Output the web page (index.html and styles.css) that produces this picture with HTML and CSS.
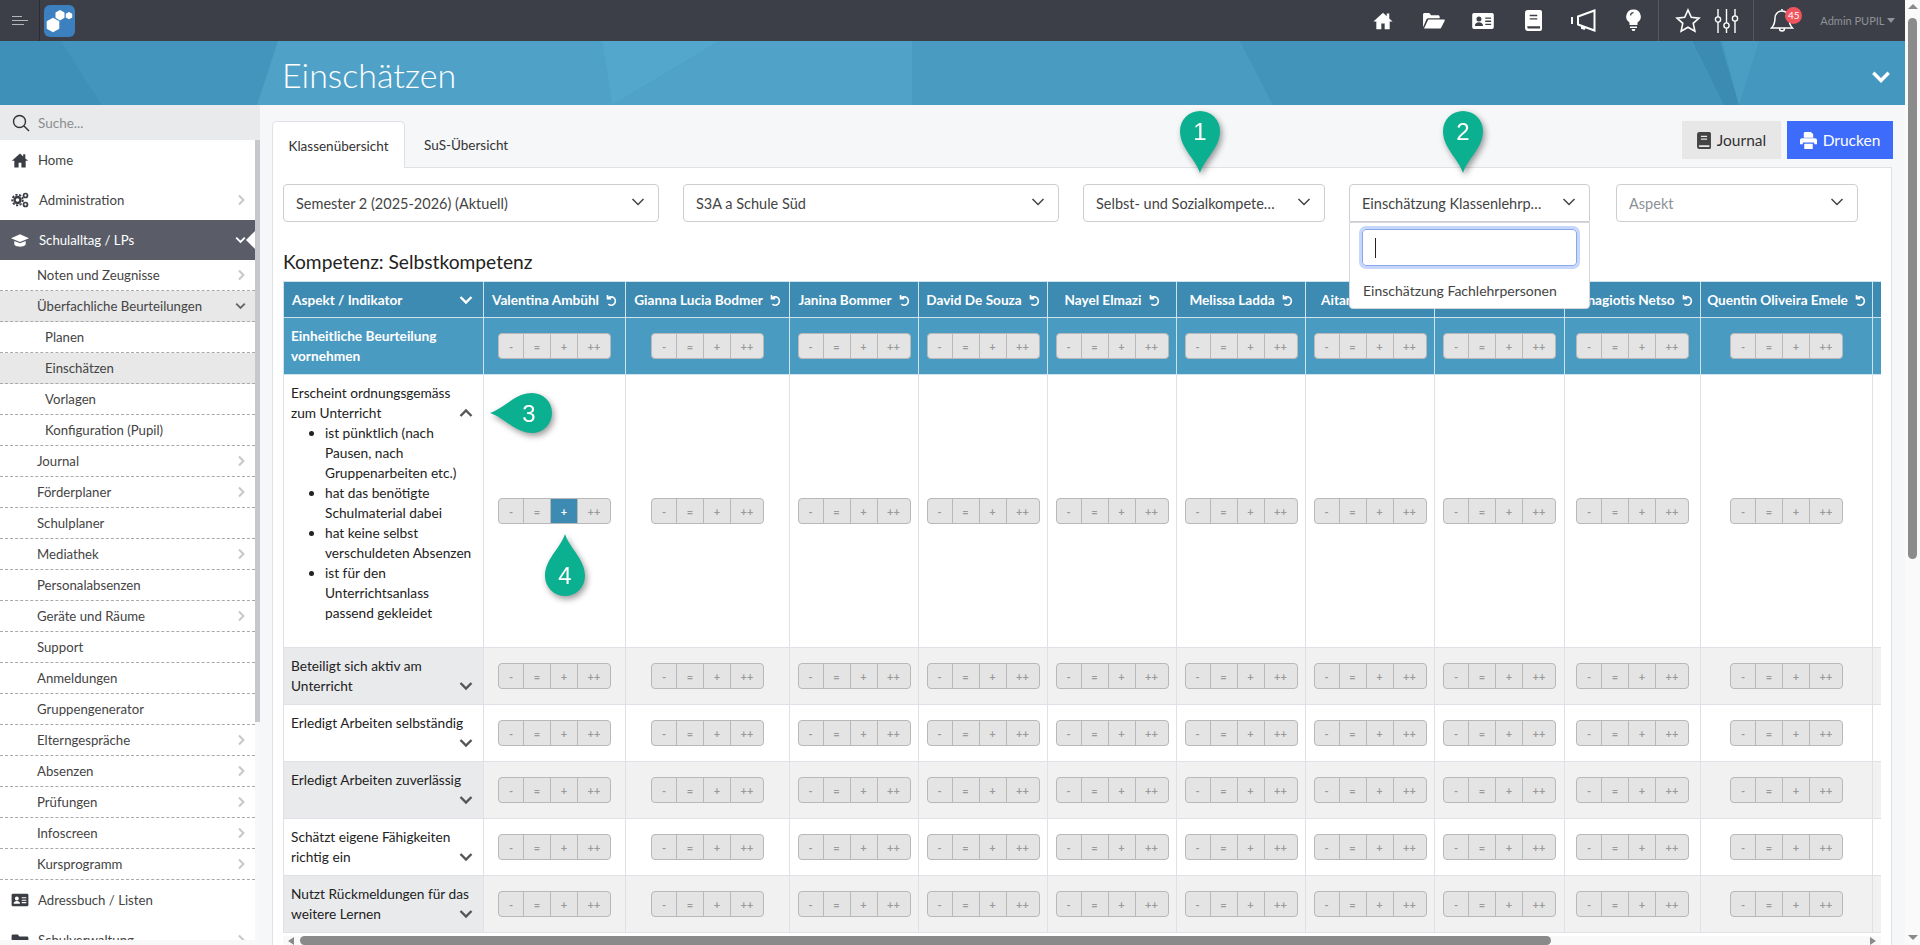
FILE: index.html
```html
<!DOCTYPE html>
<html lang="de">
<head>
    <meta charset="UTF-8">
    <meta name="viewport" content="width=device-width, initial-scale=1.0">
    <title>Einschätzen</title>
    <link rel="stylesheet" href="styles.css">
</head>
<body>
    <svg class="defs" aria-hidden="true">
        <symbol id="pin-shape" viewBox="0 0 40 62"><path d="M20 62C15 47 0 37 0 20a20 20 0 0 1 40 0C40 37 25 47 20 62z"/></symbol>
        <symbol id="chev-right" viewBox="0 0 10 14"><path d="M2.5 1.5 8 7l-5.500 5.500" fill="none" stroke="currentColor" stroke-width="2.600"/></symbol>
        <symbol id="chev-down" viewBox="0 0 14 10"><path d="M1.500 2 7 7.500 12.500 2" fill="none" stroke="currentColor" stroke-width="2.400"/></symbol>
        <symbol id="chev-thin" viewBox="0 0 14 10"><path d="M1.500 2 7 7.500 12.500 2" fill="none" stroke="currentColor" stroke-width="1.500"/></symbol>
        <symbol id="undo" viewBox="0 0 12 12"><path d="M2.500 1v3.700h3.700M2.800 4.500a4.200 4.200 0 1 1 .6 5.700" fill="none" stroke="currentColor" stroke-width="1.600"/></symbol>
        <symbol id="id-card" viewBox="0 0 24 20"><path fill-rule="evenodd" d="M2 1h20a2 2 0 0 1 2 2v14a2 2 0 0 1-2 2H2a2 2 0 0 1-2-2V3a2 2 0 0 1 2-2zM7.500 5a2.800 2.800 0 1 0 0 5.600 2.800 2.800 0 0 0 0-5.600zM3 15.500h9c0-2.500-1.800-4-4.500-4S3 13 3 15.500zM14.500 6v1.500H21V6zM14.500 9.500V11H21V9.500zM14.500 13v1.500H21V13z"/></symbol>
        <symbol id="book" viewBox="0 0 18 22"><path fill-rule="evenodd" d="M3 0h13a2 2 0 0 1 2 2v18a2 2 0 0 1-2 2H3a3 3 0 0 1-3-3V3a3 3 0 0 1 3-3zM5 5v1.500h8V5zM5 8.500V10h8V8.500zM2.500 17v1.500c0 .5.300 1 1 1H16V17z"/></symbol>
        <symbol id="home" viewBox="0 0 24 24"><path d="M12 2 .5 12.500H4V22h6v-7h4v7h6v-9.500h3.500L19.500 9V3h-3v3.200z"/></symbol>
        <symbol id="folder" viewBox="0 0 24 20"><path d="M1 17V3.500C1 2.700 1.700 2 2.500 2h5l2 2.500h7.500c.8 0 1.500.7 1.500 1.500v1.500H6.500c-.8 0-1.500.4-1.900 1.100zM6.500 9H23c.7 0 1.100.7.800 1.300L20 17.500c-.3.600-.9.900-1.500.9H2z"/></symbol>
    </svg>

    <div class="page">
        <div class="app">
            <header class="topbar">
                <div class="burger"><span class="b1"></span><span class="b2"></span><span class="b3"></span></div>
                <div class="logo">
                    <svg viewBox="0 0 31 32" width="31" height="32">
                        <path d="M9 12.700l6.300 3.650v7.300L9 27.300l-6.300-3.650v-7.300z"/>
                        <path d="M16 5l4.500 2.600v5.200L16 15.400l-4.500-2.600V7.600z"/>
                        <path d="M25 7l3.200 1.800v3.600L25 14.200l-3.200-1.800V8.800z"/>
                    </svg>
                </div>
                <nav class="top-links">
                    <a><svg width="20" height="20"><use href="#home"/></svg></a>
                    <a><svg width="23" height="19"><use href="#folder"/></svg></a>
                    <a><svg width="22" height="18"><use href="#id-card"/></svg></a>
                    <a><svg width="17" height="21"><use href="#book"/></svg></a>
                    <a><svg width="26" height="23" viewBox="0 0 26 23" fill="none" stroke="#fff" stroke-width="2"><path d="M8 7.500 24.500 1.500v20L8 15.500zM2 8v7M12 17v2l3 1"/></svg></a>
                    <a><svg width="15" height="23" viewBox="0 0 15 23"><path fill-rule="evenodd" d="M7.500 .5A7 7 0 0 0 3.500 13.400V16h8v-2.600A7 7 0 0 0 7.500 .5zM4 6.500a3.500 3.500 0 0 1 3.500-3.500v1.200A2.300 2.300 0 0 0 5.200 6.500z"/><path d="M4 17.500h7V19H4zM5.500 20h4l-1 2h-2z"/></svg></a>
                </nav>
                <nav class="top-tools">
                    <a><svg width="26" height="26" viewBox="0 0 26 26" fill="none" stroke="#fff" stroke-width="1.600"><path d="M13 2l3.300 7.300 7.700.8-5.800 5.200 1.700 7.900L13 19.200 6.100 23.200l1.700-7.900L2 10.100l7.700-.8z"/></svg></a>
                    <a><svg width="25" height="26" viewBox="0 0 25 26" fill="none" stroke="#fff" stroke-width="1.400"><path d="M4 1v8M4 14v11M12.500 1v14M12.500 20v5M21 1v7M21 13v12"/><circle cx="4" cy="11.500" r="2.600"/><circle cx="12.500" cy="17.500" r="2.600"/><circle cx="21" cy="10.500" r="2.600"/></svg></a>
                </nav>
                <div class="top-bell">
                    <svg width="24" height="26" viewBox="0 0 24 26" fill="none" stroke="#fff" stroke-width="1.500"><path d="M12 3a7 7 0 0 0-7 7c0 6-1.500 8-3.500 10h21c-2-2-3.500-4-3.500-10a7 7 0 0 0-7-7zM12 1v2M9.500 20.500a2.500 2.500 0 0 0 5 0"/></svg>
                    <span class="badge">45</span>
                </div>
                <div class="top-user">Admin PUPIL <span class="caret-down"></span></div>
            </header>

            <div class="title-band">
                <svg class="band-art" viewBox="0 0 1905 64" preserveAspectRatio="none" aria-hidden="true">
                    <rect width="1905" height="64" fill="#4497be"/>
                    <path d="M0 0h61l41 64H0z" fill="#3f90b8"/>
                    <path d="M61 0h217l-21 64H102z" fill="#4495bd"/>
                    <path d="M278 0h324l10 64H257z" fill="#4fa1c7"/>
                    <path d="M602 0h118L612 64z" fill="#54a7cc"/>
                    <path d="M720 0h192v64H612z" fill="#50a2c8"/>
                    <path d="M912 0h328l33 64H912z" fill="#4a9bc2"/>
                    <path d="M1240 0h450l34 64h-451z" fill="#4394bb"/>
                    <path d="M1692 0h28l19 64h-15z" fill="#3b8bb2"/>
                    <path d="M1722 0h37l-20 64z" fill="#4a9ec4"/>
                </svg>
                <h1 class="page-title">Einschätzen</h1>
                <svg class="band-chev" width="20" height="14"><use href="#chev-down"/></svg>
            </div>

            <div class="content-row">
                <aside class="sidebar">
                    <div class="side-search">
                        <svg width="18" height="18" viewBox="0 0 18 18" fill="none" stroke="#333" stroke-width="1.400"><circle cx="7.500" cy="7.500" r="6"/><path d="M12 12l5 5"/></svg>
                        <span>Suche...</span>
                    </div>
                    <div class="side-body">
                        <ul class="side-menu">
                            <li class="top-item">
                                <svg class="ico" width="17" height="17"><use href="#home"/></svg><span>Home</span>
                            </li>
                            <li class="top-item">
                                <svg class="ico ico-wide" width="18" height="16" viewBox="0 0 18 16" fill="none" stroke="currentColor"><circle cx="6.500" cy="8" r="3" stroke-width="2.400"/><circle cx="6.500" cy="8" r="5.300" stroke-width="1.800" stroke-dasharray="2.200 1.500"/><circle cx="14.500" cy="3.500" r="2" stroke-width="1.700"/><circle cx="14.500" cy="12.500" r="2" stroke-width="1.700"/></svg><span>Administration</span>
                                <svg class="more" width="8" height="12"><use href="#chev-right"/></svg>
                            </li>
                            <li class="top-item top-open">
                                <svg class="ico ico-wide" width="19" height="15" viewBox="0 0 19 15"><path d="M9.500 1 0 5l9.500 4L19 5zM3.500 8v3.500c0 1.500 3 2.500 6 2.500s6-1 6-2.500V8l-6 2.500z"/></svg><span>Schulalltag / LPs</span>
                                <svg class="more-open" width="11" height="8"><use href="#chev-down"/></svg>
                                <i class="notch"></i>
                            </li>
                            <li class="sub-item">Noten und Zeugnisse<svg class="more" width="8" height="12"><use href="#chev-right"/></svg></li>
                            <li class="sub-item is-on">Überfachliche Beurteilungen<svg class="more-down" width="11" height="8"><use href="#chev-down"/></svg></li>
                            <li class="sub-item deep">Planen</li>
                            <li class="sub-item deep is-on">Einschätzen</li>
                            <li class="sub-item deep">Vorlagen</li>
                            <li class="sub-item deep">Konfiguration (Pupil)</li>
                            <li class="sub-item">Journal<svg class="more" width="8" height="12"><use href="#chev-right"/></svg></li>
                            <li class="sub-item">Förderplaner<svg class="more" width="8" height="12"><use href="#chev-right"/></svg></li>
                            <li class="sub-item">Schulplaner</li>
                            <li class="sub-item">Mediathek<svg class="more" width="8" height="12"><use href="#chev-right"/></svg></li>
                            <li class="sub-item">Personalabsenzen</li>
                            <li class="sub-item">Geräte und Räume<svg class="more" width="8" height="12"><use href="#chev-right"/></svg></li>
                            <li class="sub-item">Support</li>
                            <li class="sub-item">Anmeldungen</li>
                            <li class="sub-item">Gruppengenerator</li>
                            <li class="sub-item">Elterngespräche<svg class="more" width="8" height="12"><use href="#chev-right"/></svg></li>
                            <li class="sub-item">Absenzen<svg class="more" width="8" height="12"><use href="#chev-right"/></svg></li>
                            <li class="sub-item">Prüfungen<svg class="more" width="8" height="12"><use href="#chev-right"/></svg></li>
                            <li class="sub-item">Infoscreen<svg class="more" width="8" height="12"><use href="#chev-right"/></svg></li>
                            <li class="sub-item">Kursprogramm<svg class="more" width="8" height="12"><use href="#chev-right"/></svg></li>
                            <li class="top-item">
                                <svg class="ico" width="17" height="14"><use href="#id-card"/></svg><span>Adressbuch / Listen</span>
                            </li>
                            <li class="top-item">
                                <svg class="ico" width="17" height="14" viewBox="0 0 24 20"><path d="M2 2h7l2 3h11a2 2 0 0 1 2 2v10a2 2 0 0 1-2 2H2a2 2 0 0 1-2-2V4a2 2 0 0 1 2-2z"/></svg><span>Schulverwaltung</span>
                                <svg class="more" width="8" height="12"><use href="#chev-right"/></svg>
                            </li>
                        </ul>
                        <div class="side-scroll"><div class="side-thumb"></div></div>
                    </div>
                </aside>

                <main class="main">
                    <div class="tab-row">
                        <a class="tab tab-active">Klassenübersicht</a>
                        <a class="tab">SuS-Übersicht</a>
                        <div class="tab-actions">
                            <button class="btn btn-journal"><svg width="14" height="17"><use href="#book"/></svg>Journal</button>
                            <button class="btn btn-print">
                                <svg width="17" height="17" viewBox="0 0 18 18"><path fill-rule="evenodd" d="M4 1.500C4 .7 4.700 0 5.500 0h6L14 2.500V6H4zM2 6.500h14a2 2 0 0 1 2 2V13h-3v-2H3v2H0V8.500a2 2 0 0 1 2-2zM4.500 12.500h9V18h-9z"/></svg>Drucken
                            </button>
                        </div>
                    </div>

                    <section class="panel">
                        <div class="filters">
                            <div class="select sel-wide"><span class="select-value">Semester 2 (2025-2026) (Aktuell)</span><svg width="14" height="10"><use href="#chev-thin"/></svg></div>
                            <div class="select sel-wide"><span class="select-value">S3A a Schule Süd</span><svg width="14" height="10"><use href="#chev-thin"/></svg></div>
                            <div class="select sel-mid"><span class="select-value">Selbst- und Sozialkompetenzen</span><svg width="14" height="10"><use href="#chev-thin"/></svg></div>
                            <div class="select sel-open">
                                <span class="select-value">Einschätzung Klassenlehrpersonen</span><svg width="14" height="10"><use href="#chev-thin"/></svg>
                                <div class="dropdown">
                                    <div class="dropdown-search"><span class="text-caret"></span></div>
                                    <div class="dropdown-option">Einschätzung Fachlehrpersonen</div>
                                </div>
                            </div>
                            <div class="select sel-aspect"><span class="select-value placeholder">Aspekt</span><svg width="14" height="10"><use href="#chev-thin"/></svg></div>
                        </div>

                        <h2 class="section-title">Kompetenz: Selbstkompetenz</h2>

                        <div class="table-clip">
                            <table class="rating-table">
                                <colgroup>
                                    <col class="c-aspect"><col class="c-1"><col class="c-2"><col class="c-3"><col class="c-4"><col class="c-5"><col class="c-6"><col class="c-7"><col class="c-8"><col class="c-9"><col class="c-10"><col class="c-11">
                                </colgroup>
                                <thead>
                                    <tr>
                                        <th class="th-aspect"><div class="aspect-title">Aspekt / Indikator<svg width="14" height="10"><use href="#chev-down"/></svg></div></th>
                                        <th>Valentina Ambühl<svg class="reset" width="12" height="12"><use href="#undo"/></svg></th>
                                        <th>Gianna Lucia Bodmer<svg class="reset" width="12" height="12"><use href="#undo"/></svg></th>
                                        <th>Janina Bommer<svg class="reset" width="12" height="12"><use href="#undo"/></svg></th>
                                        <th>David De Souza<svg class="reset" width="12" height="12"><use href="#undo"/></svg></th>
                                        <th>Nayel Elmazi<svg class="reset" width="12" height="12"><use href="#undo"/></svg></th>
                                        <th>Melissa Ladda<svg class="reset" width="12" height="12"><use href="#undo"/></svg></th>
                                        <th class="th-cut">Aitan</th>
                                        <th></th>
                                        <th class="th-end">Panagiotis Netso<svg class="reset" width="12" height="12"><use href="#undo"/></svg></th>
                                        <th>Quentin Oliveira Emele<svg class="reset" width="12" height="12"><use href="#undo"/></svg></th>
                                        <th></th>
                                    </tr>
                                </thead>
                                <tbody>
                                    <tr class="row-all"><td class="aspect">Einheitliche Beurteilung vornehmen</td></tr>
                                    <tr class="row-open">
                                        <td class="aspect">
                                            <div class="aspect-head"><span>Erscheint ordnungsgemäss<br>zum Unterricht</span><svg width="14" height="10" class="flip"><use href="#chev-down"/></svg></div>
                                            <ul class="indicators">
                                                <li>ist pünktlich (nach Pausen, nach Gruppenarbeiten etc.)</li>
                                                <li>hat das benötigte Schulmaterial dabei</li>
                                                <li>hat keine selbst verschuldeten Absenzen</li>
                                                <li>ist für den Unterrichtsanlass passend gekleidet</li>
                                            </ul>
                                        </td>
                                    </tr>
                                    <tr class="row-grey"><td class="aspect"><div class="aspect-head"><span>Beteiligt sich aktiv am Unterricht</span><svg width="14" height="10"><use href="#chev-down"/></svg></div></td></tr>
                                    <tr><td class="aspect"><div class="aspect-head"><span>Erledigt Arbeiten selbständig</span><svg width="14" height="10"><use href="#chev-down"/></svg></div></td></tr>
                                    <tr class="row-grey"><td class="aspect"><div class="aspect-head"><span>Erledigt Arbeiten zuverlässig</span><svg width="14" height="10"><use href="#chev-down"/></svg></div></td></tr>
                                    <tr><td class="aspect"><div class="aspect-head"><span>Schätzt eigene Fähigkeiten richtig ein</span><svg width="14" height="10"><use href="#chev-down"/></svg></div></td></tr>
                                    <tr class="row-grey"><td class="aspect"><div class="aspect-head"><span>Nutzt Rückmeldungen für das weitere Lernen</span><svg width="14" height="10"><use href="#chev-down"/></svg></div></td></tr>
                                </tbody>
                            </table>
                        </div>
                        <div class="h-scroll">
                            <span class="arrow-left"></span>
                            <span class="h-thumb"></span>
                            <span class="arrow-right"></span>
                        </div>
                    </section>
                </main>
            </div>
        </div>
        <div class="page-scroll">
            <span class="arrow-up"></span>
            <span class="page-thumb"></span>
            <span class="arrow-down"></span>
        </div>

        <svg class="pin pin-1" viewBox="0 0 40 62"><use href="#pin-shape" width="40" height="62"/><text x="20" y="29">1</text></svg>
        <svg class="pin pin-2" viewBox="0 0 40 62"><use href="#pin-shape" width="40" height="62"/><text x="20" y="29">2</text></svg>
        <svg class="pin pin-3" viewBox="0 0 62 40"><g transform="matrix(0 1 -1 0 62 0)"><use href="#pin-shape" width="40" height="62"/></g><text x="39" y="29">3</text></svg>
        <svg class="pin pin-4" viewBox="0 0 40 62"><g transform="rotate(180 20 31)"><use href="#pin-shape" width="40" height="62"/></g><text x="20" y="50">4</text></svg>
    </div>
    <script src="script.js"></script>
</body>
</html>
```

FILE: styles.css
```css
* {
    box-sizing: border-box;
}

html, body {
    height: 100%;
}

body {
    font-family: Lato, "Open Sans", sans-serif;
    font-size: 13.2px;
    color: #444;
    margin: 0;
    overflow: hidden;
}

.defs {
    display: none;
}

.page {
    position: relative;
    display: flex;
    height: 100vh;
    overflow: hidden;
}

.app {
    flex: 1;
    min-width: 0;
    display: flex;
    flex-direction: column;
}

/* top bar */
.topbar {
    flex: none;
    height: 41px;
    background: #3c3f47;
    display: flex;
    align-items: center;
    color: #fff;
}

.burger {
    width: 40px;
    height: 41px;
    border-right: 1px solid #2b2d33;
    padding: 16px 0 0 12px;
}

.burger span {
    display: block;
    height: 1px;
    background: #b4b6ba;
    margin-bottom: 3px;
}

.burger .b1 { width: 10px; }
.burger .b2 { width: 16px; }
.burger .b3 { width: 12px; }

.logo {
    width: 31px;
    height: 32px;
    margin-left: 4px;
    border-radius: 6px;
    background: #3d80bf;
}

.logo svg {
    display: block;
    fill: #fff;
}

.top-links {
    margin-left: auto;
    display: flex;
    fill: #fff;
}

.top-links a {
    width: 50px;
    height: 41px;
    display: flex;
    align-items: center;
    justify-content: center;
}

.top-tools {
    display: flex;
    height: 41px;
    padding: 0 8px 0 10px;
    border-left: 1px solid #55585f;
    border-right: 1px solid #55585f;
}

.top-tools a {
    width: 38px;
    display: flex;
    align-items: center;
    justify-content: center;
}

.top-bell {
    position: relative;
    width: 38px;
    margin-left: 9px;
    display: flex;
    align-items: center;
    justify-content: center;
}

.badge {
    position: absolute;
    left: 22px;
    top: -1px;
    width: 17px;
    height: 17px;
    border-radius: 50%;
    background: #f0545f;
    color: #fff;
    font-size: 10px;
    line-height: 17px;
    text-align: center;
}

.top-user {
    margin-left: 19px;
    padding-right: 10px;
    color: #8f9299;
    font-size: 11px;
    white-space: nowrap;
}

.caret-down {
    display: inline-block;
    border: 4px solid transparent;
    border-top: 5px solid #8f9299;
    border-bottom: 0;
    vertical-align: 2px;
}

/* blue title band */
.title-band {
    position: relative;
    flex: none;
    height: 64px;
    display: flex;
    align-items: center;
    padding: 0 14px 0 282px;
    color: #fff;
}

.band-art {
    position: absolute;
    left: 0;
    top: 0;
    width: 100%;
    height: 100%;
}

.page-title {
    position: relative;
    margin: 2px 0 0;
    font-size: 34px;
    font-weight: 300;
}

.band-chev {
    position: relative;
    margin-left: auto;
    margin-top: 8px;
}

.content-row {
    flex: 1;
    min-height: 0;
    display: flex;
}

/* sidebar */
.sidebar {
    flex: none;
    width: 260px;
    background: #f8f8f9;
    display: flex;
    flex-direction: column;
}

.side-search {
    flex: none;
    height: 35px;
    background: #e9eaec;
    display: flex;
    align-items: center;
    gap: 8px;
    padding-left: 12px;
    color: #8d8d8d;
    font-size: 13.500px;
}

.side-body {
    flex: 1;
    min-height: 0;
    display: flex;
}

.side-menu {
    width: 255px;
    height: 800px;
    margin: 0;
    padding: 0;
    list-style: none;
    overflow: hidden;
    background: #fff;
}

.side-scroll {
    width: 5px;
}

.side-thumb {
    height: 582px;
    background: #c5c8cc;
}

.top-item {
    position: relative;
    height: 40px;
    display: flex;
    align-items: center;
    padding-left: 11px;
    color: #444;
}

.top-item .ico {
    width: 18px;
    margin-right: 9px;
    flex: none;
    fill: #3a3d44;
    color: #3a3d44;
}

.top-item .ico-wide {
    margin-right: 10px;
}

.top-item .ico-wide[fill="none"] {
    fill: none;
}

.top-open {
    background: #5a5d68;
    color: #fff;
}

.top-open .ico {
    fill: #fff;
    color: #fff;
}

.more {
    margin-left: auto;
    margin-right: 10px;
    color: #c8c8c8;
    flex: none;
}

.more-open,
.more-down {
    margin-left: auto;
    margin-right: 9px;
    flex: none;
}

.more-open {
    color: #fff;
}

.more-down {
    color: #666;
}

.notch {
    position: absolute;
    right: 0;
    top: 11px;
    border: 9px solid transparent;
    border-left: 0;
    border-right: 9px solid #fff;
}

.sub-item {
    height: 31px;
    display: flex;
    align-items: center;
    padding-left: 37px;
    border-bottom: 1px dashed #aaa;
}

.sub-item.deep {
    padding-left: 45px;
}

.sub-item.is-on {
    background: #e8e8e8;
}

/* main area */
.main {
    flex: 1;
    min-width: 0;
    background: #f6f7f9;
    padding: 16px 12px 0;
    display: flex;
    flex-direction: column;
}

.tab-row {
    flex: none;
    height: 46px;
    display: flex;
    align-items: flex-start;
}

.tab {
    height: 46px;
    line-height: 48px;
    padding: 0 19px;
    color: #333;
    white-space: nowrap;
    font-size: 13.500px;
}

.tab-active {
    position: relative;
    z-index: 1;
    width: 133px;
    height: 47px;
    padding: 0;
    text-align: center;
    background: #fff;
    border: 1px solid #dfe1e6;
    border-bottom: 0;
    border-radius: 5px 5px 0 0;
}

.tab-actions {
    margin-left: auto;
    display: flex;
    gap: 6px;
}

.btn {
    height: 38px;
    border: 0;
    padding: 0;
    font-family: inherit;
    font-size: 15.500px;
    display: flex;
    align-items: center;
    justify-content: center;
    gap: 6px;
}

.btn-journal {
    width: 99px;
    background: #e7e7e8;
    color: #333;
    fill: #444;
}

.btn-print {
    width: 106px;
    background: #3d6bfb;
    color: #fff;
    fill: #fff;
}

.panel {
    flex: 1;
    min-height: 0;
    margin-right: 1px;
    background: #fff;
    border: 1px solid #dfe1e6;
    border-bottom: 0;
    padding: 16px 10px 0;
    display: flex;
    flex-direction: column;
}

.filters {
    flex: none;
    display: flex;
    gap: 24px;
}

.select {
    position: relative;
    height: 38px;
    border: 1px solid #ccced2;
    border-radius: 4px;
    display: flex;
    align-items: center;
    padding: 0 13px 0 12px;
    gap: 16px;
    font-size: 14.500px;
    color: #444;
    background: #fff;
}

.select svg {
    flex: none;
    color: #444;
    margin-top: -2px;
}

.select-value {
    flex: 1;
    min-width: 0;
    white-space: nowrap;
    overflow: hidden;
    text-overflow: ellipsis;
}

.placeholder {
    color: #8d9096;
}

.sel-wide { width: 376px; }
.sel-mid { width: 242px; }
.sel-aspect { width: 242px; margin-left: 2px; }

.sel-open {
    width: 241px;
    border-radius: 4px 4px 0 0;
}

.dropdown {
    position: absolute;
    z-index: 5;
    left: -1px;
    top: 37px;
    width: 241px;
    height: 87px;
    background: #fff;
    border: 1px solid #d4d6da;
    border-radius: 0 0 4px 4px;
    padding: 6px 12px 0;
}

.dropdown-search {
    height: 37px;
    border: 1px solid #86a8ee;
    border-radius: 4px;
    box-shadow: 0 0 0 3px #c6d7fb;
    padding: 8px 12px;
}

.text-caret {
    display: block;
    width: 1px;
    height: 20px;
    background: #222;
}

.dropdown-option {
    margin-top: 16px;
    padding-left: 1px;
    font-size: 14px;
    white-space: nowrap;
}

.section-title {
    flex: none;
    margin: 28px 0 7px;
    font-size: 19.200px;
    line-height: 24px;
    font-weight: 400;
    color: #222;
}

/* rating table */
.table-clip {
    flex: none;
    height: 655px;
    overflow: hidden;
}

.rating-table {
    border-collapse: collapse;
    table-layout: fixed;
    width: 1718px;
}

.c-aspect { width: 200px; }
.c-1 { width: 142px; }
.c-2 { width: 164px; }
.c-3, .c-4, .c-5, .c-6 { width: 129px; }
.c-7 { width: 129px; }
.c-8 { width: 130px; }
.c-9 { width: 136px; }
.c-10 { width: 172px; }
.c-11 { width: 130px; }

.rating-table th {
    height: 36px;
    background: #3d8ab2;
    color: #fff;
    font-weight: 700;
    font-size: 13.600px;
    padding: 0 4px;
    border: 1px solid #cfe3ed;
    white-space: nowrap;
    text-align: center;
}

.rating-table .th-aspect {
    padding: 0 10px 0 8px;
    text-align: left;
}

.aspect-title {
    display: flex;
    align-items: center;
    justify-content: space-between;
}

.rating-table .th-cut {
    padding-left: 15px;
    text-align: left;
}

.reset {
    margin-left: 6px;
    vertical-align: -1px;
}

.rating-table td {
    border: 1px solid #dfe1e6;
    text-align: center;
    vertical-align: middle;
    height: 57px;
    padding: 0;
}

.rating-table .aspect {
    text-align: left;
    padding: 8px 10px 8px 7px;
    font-size: 13.700px;
    line-height: 20px;
    color: #222;
    vertical-align: top;
}

.aspect-head {
    display: flex;
    align-items: flex-end;
    min-height: 40px;
}

.aspect-head span {
    flex: 1;
    margin-right: -13px;
    align-self: flex-start;
}

.aspect-head svg {
    flex: none;
    margin-bottom: 5px;
    color: #555;
}

.aspect-head .flip {
    transform: rotate(180deg);
}

.indicators {
    margin: 0 0 16px;
    padding-left: 34px;
}

.row-all td {
    background: #4a9bc2;
    border-color: #cfe3ed;
}

.row-all .aspect {
    color: #fff;
    font-weight: 700;
    vertical-align: middle;
}

.row-open td {
    height: 272px;
}

.row-grey td {
    background: #f1f1f2;
}

.row-grey .aspect {
    background: #e9eaec;
}

.rating {
    display: inline-flex;
    height: 26px;
    border: 1px solid #b8b8b8;
    border-radius: 4px;
    background: #e4e4e4;
    overflow: hidden;
    vertical-align: middle;
}

.rating button {
    width: 27px;
    border: 0;
    border-right: 1px solid #b8b8b8;
    background: none;
    padding: 0;
    font-family: inherit;
    font-size: 11px;
    font-weight: 700;
    color: #9a9a9a;
}

.rating button:first-child {
    width: 25px;
}

.rating button:last-child {
    width: 32px;
    border-right: 0;
}

.rating .is-set {
    background: #3d8ab2;
    color: #fff;
}

.h-scroll {
    flex: none;
    height: 9px;
    display: flex;
    align-items: center;
    background: #f9f9f9;
    padding: 0 5px;
}

.arrow-left {
    border: 4px solid transparent;
    border-left: 0;
    border-right: 6px solid #8a8a8a;
}

.h-thumb {
    width: 1251px;
    height: 9px;
    margin-left: 6px;
    border-radius: 5px;
    background: #8a8a8a;
}

.arrow-right {
    margin-left: auto;
    border: 4px solid transparent;
    border-right: 0;
    border-left: 6px solid #8a8a8a;
}

/* page scrollbar */
.page-scroll {
    flex: none;
    width: 15px;
    background: #fafafa;
    display: flex;
    flex-direction: column;
    align-items: center;
    padding-top: 4px;
}

.arrow-up {
    border: 5px solid transparent;
    border-top: 0;
    border-bottom: 5px solid #8a8a8a;
}

.page-thumb {
    width: 9px;
    height: 541px;
    margin-top: 9px;
    border-radius: 5px;
    background: #8b8b8b;
}

.arrow-down {
    margin-top: auto;
    margin-bottom: 5px;
    border: 5px solid transparent;
    border-bottom: 0;
    border-top: 5px solid #8a8a8a;
}

/* numbered markers over the screenshot */
.pin {
    position: absolute;
    z-index: 10;
    fill: #0ab08f;
    overflow: visible;
    filter: drop-shadow(2px 3px 3px rgba(0, 0, 0, 0.4));
}

.pin text {
    fill: #fff;
    font-family: "Liberation Sans", Arial, sans-serif;
    font-size: 24px;
    text-anchor: middle;
}

.pin-1 { left: 1180px; top: 111px; width: 40px; height: 62px; }
.pin-2 { left: 1443px; top: 111px; width: 40px; height: 62px; }
.pin-3 { left: 490px; top: 393px; width: 62px; height: 40px; }
.pin-4 { left: 545px; top: 534px; width: 40px; height: 62px; }
```

FILE: script.js
```js
// every pupil column has the same four rating buttons
const pupilCount = 11;

document.querySelectorAll('.rating-table tbody tr').forEach(function(row) {
    for (let i = 0; i < pupilCount; i++) {
        const cell = document.createElement('td');
        const rating = document.createElement('div');
        rating.className = 'rating';

        ['-', '=', '+', '++'].forEach(function(mark) {
            const button = document.createElement('button');
            button.textContent = mark;
            if (row.classList.contains('row-open') && i === 0 && mark === '+') {
                button.className = 'is-set';
            }
            rating.appendChild(button);
        });

        cell.appendChild(rating);
        row.appendChild(cell);
    }
});
```
